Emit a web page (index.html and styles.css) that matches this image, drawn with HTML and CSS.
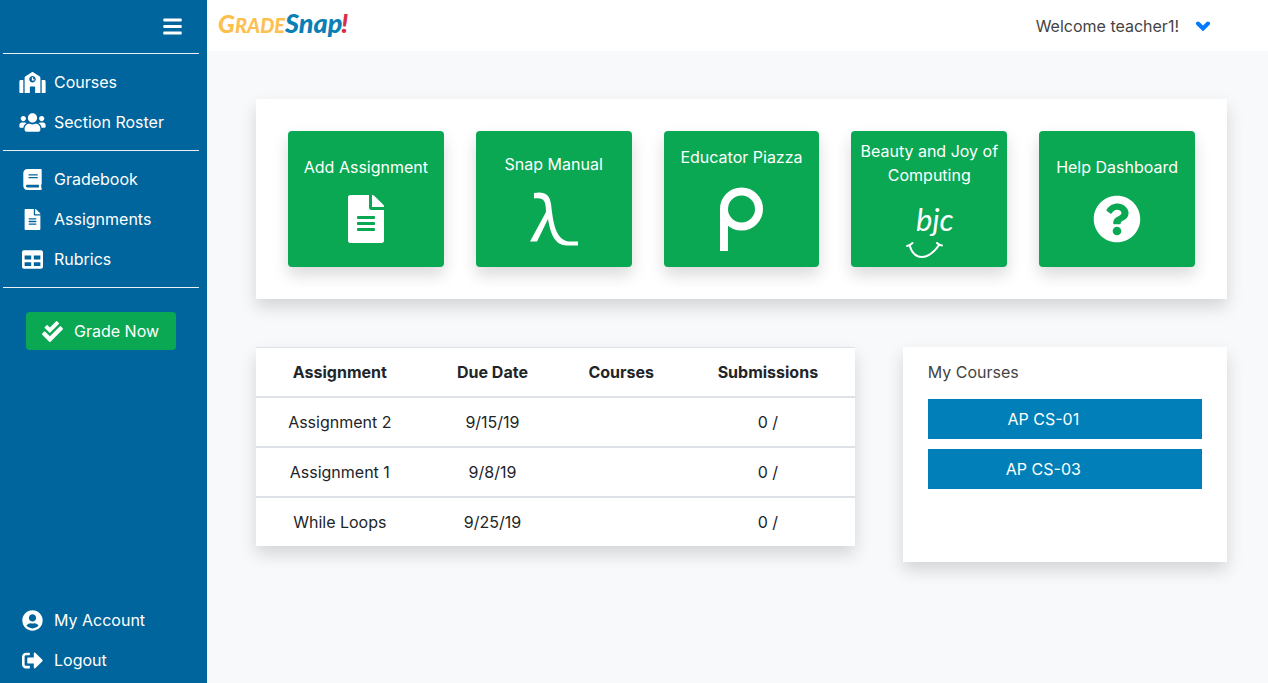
FILE: index.html
```html
<!DOCTYPE html>
<html lang="en">
<head>
<meta charset="utf-8">
<meta name="viewport" content="width=device-width, initial-scale=1">
<title>GradeSnap!</title>
<link rel="stylesheet" href="styles.css">
</head>
<body>
<div class="layout">
  <nav class="sidebar" aria-label="Main">
    <div class="sidebar-top">
      <button class="menu-toggle" type="button" aria-label="Toggle menu">
        <svg class="icon-menu" viewBox="0 0 448 512"><path d="M16 132h416c9 0 16-7 16-16V76c0-9-7-16-16-16H16C7 60 0 67 0 76v40c0 9 7 16 16 16zm0 160h416c9 0 16-7 16-16v-40c0-9-7-16-16-16H16c-9 0-16 7-16 16v40c0 9 7 16 16 16zm0 160h416c9 0 16-7 16-16v-40c0-9-7-16-16-16H16c-9 0-16 7-16 16v40c0 9 7 16 16 16z"/></svg>
      </button>
    </div>
    <div class="nav-group">
      <a class="nav-link" href="#"><svg class="icon" viewBox="0 0 640 512"><path d="M0 224v272c0 8.84 7.16 16 16 16h80V192H32c-17.67 0-32 14.33-32 32zm360-48h-24v-40c0-4.42-3.58-8-8-8h-16c-4.42 0-8 3.58-8 8v64c0 4.42 3.58 8 8 8h48c4.42 0 8-3.58 8-8v-16c0-4.42-3.58-8-8-8zm137.75-63.96l-160-106.67a32.02 32.02 0 0 0-35.5 0l-160 106.67A32.002 32.002 0 0 0 128 138.66V512h128V368c0-8.84 7.16-16 16-16h96c8.84 0 16 7.16 16 16v144h128V138.67c0-10.7-5.35-20.7-14.25-26.63zM320 256c-44.18 0-80-35.82-80-80s35.82-80 80-80 80 35.82 80 80-35.82 80-80 80zm288-64h-64v320h80c8.84 0 16-7.16 16-16V224c0-17.67-14.33-32-32-32z"/></svg><span>Courses</span></a>
      <a class="nav-link" href="#"><svg class="icon" viewBox="0 0 640 512"><path d="M96 224c35.3 0 64-28.7 64-64s-28.7-64-64-64-64 28.7-64 64 28.7 64 64 64zm448 0c35.3 0 64-28.7 64-64s-28.7-64-64-64-64 28.7-64 64 28.7 64 64 64zm32 32h-64c-17.6 0-33.5 7.1-45.1 18.6 40.3 22.1 68.9 62 75.1 109.4h66c17.7 0 32-14.3 32-32v-32c0-35.3-28.7-64-64-64zm-256 0c61.9 0 112-50.1 112-112S381.9 32 320 32 208 82.1 208 144s50.1 112 112 112zm76.8 32h-8.3c-20.8 10-43.9 16-68.5 16s-47.6-6-68.5-16h-8.3C179.6 288 128 339.6 128 403.2V432c0 26.5 21.5 48 48 48h288c26.5 0 48-21.5 48-48v-28.8c0-63.6-51.6-115.2-115.2-115.2zm-223.7-13.4C161.5 263.1 145.6 256 128 256H64c-35.3 0-64 28.7-64 64v32c0 17.7 14.3 32 32 32h65.9c6.3-47.4 34.9-87.3 75.2-109.4z"/></svg><span>Section Roster</span></a>
    </div>
    <div class="nav-group">
      <a class="nav-link" href="#"><svg class="icon" viewBox="0 0 448 512"><path d="M448 360V24c0-13.3-10.7-24-24-24H96C43 0 0 43 0 96v320c0 53 43 96 96 96h328c13.3 0 24-10.7 24-24v-16c0-7.5-3.5-14.3-8.9-18.7-4.2-15.4-4.2-59.3 0-74.7 5.4-4.3 8.9-11.1 8.9-18.6zM128 134c0-3.3 2.7-6 6-6h212c3.3 0 6 2.7 6 6v20c0 3.3-2.7 6-6 6H134c-3.3 0-6-2.7-6-6v-20zm0 64c0-3.3 2.7-6 6-6h212c3.3 0 6 2.7 6 6v20c0 3.3-2.7 6-6 6H134c-3.3 0-6-2.7-6-6v-20zm253.4 250H96c-17.7 0-32-14.3-32-32 0-17.6 14.4-32 32-32h285.4c-1.9 17.1-1.9 46.9 0 64z"/></svg><span>Gradebook</span></a>
      <a class="nav-link" href="#"><svg class="icon" viewBox="0 0 384 512"><path d="M224 136V0H24C10.7 0 0 10.7 0 24v464c0 13.3 10.7 24 24 24h336c13.3 0 24-10.7 24-24V160H248c-13.2 0-24-10.8-24-24zm64 236c0 6.6-5.4 12-12 12H108c-6.6 0-12-5.4-12-12v-8c0-6.6 5.4-12 12-12h168c6.6 0 12 5.4 12 12v8zm0-64c0 6.6-5.4 12-12 12H108c-6.6 0-12-5.4-12-12v-8c0-6.6 5.4-12 12-12h168c6.6 0 12 5.4 12 12v8zm0-72v8c0 6.6-5.4 12-12 12H108c-6.6 0-12-5.4-12-12v-8c0-6.6 5.4-12 12-12h168c6.6 0 12 5.4 12 12zm96-114.1v6.1H256V0h6.1c6.4 0 12.5 2.5 17 7l97.9 98c4.5 4.5 7 10.6 7 16.9z"/></svg><span>Assignments</span></a>
      <a class="nav-link" href="#"><svg class="icon" viewBox="0 0 512 512"><path d="M464 32H48C21.49 32 0 53.49 0 80v352c0 26.51 21.49 48 48 48h416c26.51 0 48-21.49 48-48V80c0-26.51-21.49-48-48-48zM224 416H64v-96h160v96zm0-160H64v-96h160v96zm224 160H288v-96h160v96zm0-160H288v-96h160v96z"/></svg><span>Rubrics</span></a>
    </div>
    <a class="grade-now" href="#"><svg class="icon" viewBox="0 0 512 512"><path d="M505 174.8l-39.6-39.6c-9.4-9.4-24.6-9.4-33.9 0L192 374.7 80.6 263.2c-9.4-9.4-24.6-9.4-33.9 0L7 302.9c-9.4 9.4-9.4 24.6 0 34L175 505c9.4 9.4 24.6 9.4 33.9 0l296-296.2c9.4-9.5 9.4-24.7.1-34zm-324.3 106c6.2 6.3 16.4 6.3 22.6 0l208-208.2c6.2-6.3 6.2-16.4 0-22.6L366.1 4.7c-6.2-6.3-16.4-6.3-22.6 0L192 156.2l-55.4-55.5c-6.2-6.3-16.4-6.3-22.6 0L68.7 146c-6.2 6.3-6.2 16.4 0 22.6l112 112.2z"/></svg><span>Grade Now</span></a>
    <div class="nav-bottom">
      <a class="nav-link" href="#"><svg class="icon" viewBox="0 0 496 512"><path d="M248 8C111 8 0 119 0 256s111 248 248 248 248-111 248-248S385 8 248 8zm0 96c48.6 0 88 39.4 88 88s-39.4 88-88 88-88-39.4-88-88 39.4-88 88-88zm0 344c-58.7 0-111.3-26.6-146.5-68.2 18.8-35.4 55.6-59.8 98.5-59.8 2.4 0 4.8.4 7.1 1.1 13 4.2 26.6 6.9 40.9 6.9 14.3 0 28-2.7 40.9-6.9 2.3-.7 4.7-1.1 7.1-1.1 42.9 0 79.7 24.4 98.5 59.8C359.3 421.4 306.7 448 248 448z"/></svg><span>My Account</span></a>
      <a class="nav-link" href="#"><svg class="icon" viewBox="0 0 512 512"><path d="M497 273L329 441c-15 15-41 4.5-41-17v-96H152c-13.3 0-24-10.7-24-24v-96c0-13.3 10.7-24 24-24h136V88c0-21.4 25.9-32 41-17l168 168c9.3 9.4 9.3 24.6 0 34zM192 436v-40c0-6.6-5.4-12-12-12H96c-17.7 0-32-14.3-32-32V160c0-17.7 14.3-32 32-32h84c6.6 0 12-5.4 12-12V76c0-6.6-5.4-12-12-12H96c-53 0-96 43-96 96v192c0 53 43 96 96 96h84c6.6 0 12-5.4 12-12z"/></svg><span>Logout</span></a>
    </div>
  </nav>

  <div class="page">
    <header class="topbar">
      <a class="brand" href="#" aria-label="GradeSnap!">
        <svg class="logo" viewBox="0 0 134 28">
          <text class="logo-grade" y="21"><tspan class="logo-cap">G</tspan>RADE</text>
          <text class="logo-snap" x="67" y="21">Snap</text>
          <text class="logo-bang" x="123" y="21">!</text>
        </svg>
      </a>
      <button class="user-menu" type="button">
        <span>Welcome teacher1!</span>
        <svg class="chevron" viewBox="0 0 14 10"><path d="M2 2.500l5 5 5-5"/></svg>
      </button>
    </header>

    <main class="content">
      <section class="card tiles">
        <a class="tile" href="#"><span>Add Assignment</span>
          <svg class="tile-icon tile-icon-md" viewBox="0 0 384 512"><path d="M224 136V0H24C10.7 0 0 10.7 0 24v464c0 13.3 10.7 24 24 24h336c13.3 0 24-10.7 24-24V160H248c-13.2 0-24-10.8-24-24zm64 236c0 6.6-5.4 12-12 12H108c-6.6 0-12-5.4-12-12v-8c0-6.6 5.4-12 12-12h168c6.6 0 12 5.4 12 12v8zm0-64c0 6.6-5.4 12-12 12H108c-6.6 0-12-5.4-12-12v-8c0-6.6 5.4-12 12-12h168c6.6 0 12 5.4 12 12v8zm0-72v8c0 6.6-5.4 12-12 12H108c-6.6 0-12-5.4-12-12v-8c0-6.6 5.4-12 12-12h168c6.6 0 12 5.4 12 12zm96-114.1v6.1H256V0h6.1c6.4 0 12.5 2.5 17 7l97.9 98c4.5 4.5 7 10.6 7 16.9z"/></svg></a>
        <a class="tile" href="#"><span>Snap Manual</span>
          <svg class="tile-icon tile-icon-lambda" viewBox="0 0 48 54"><path d="M4 1C14 -1 19.500 2 21 12C23 29 25 47 38 49.500L48 49.500V53.500H37C25 53.500 20.500 42 18 27L7 49.500H0L16 20C16 9 14 5 4 6.500Z"/></svg></a>
        <a class="tile" href="#"><span>Educator Piazza</span>
          <svg class="tile-icon tile-icon-rho" viewBox="0 0 44 68"><g class="line"><circle cx="22.500" cy="24" r="17.500"/><path d="M5 24V66"/></g></svg></a>
        <a class="tile" href="#"><span>Beauty and Joy of Computing</span>
          <svg class="tile-icon tile-icon-bjc" viewBox="0 0 48 56"><text x="11" y="28">bjc</text><path class="smile" d="M2 43C4 43 6 41.500 7.500 40M4.500 42C9 58 23 58 34.500 41.500M32 40C33 41 34.500 42 37 42.500"/></svg></a>
        <a class="tile" href="#"><span>Help Dashboard</span>
          <svg class="tile-icon tile-icon-md" viewBox="0 0 512 512"><path d="M504 256c0 136.997-111.043 248-248 248S8 392.997 8 256C8 119.083 119.043 8 256 8s248 111.083 248 248zM262.655 90c-54.497 0-89.255 22.957-116.549 63.758-3.536 5.286-2.353 12.415 2.715 16.258l34.699 26.31c5.205 3.947 12.621 3.008 16.665-2.122 17.864-22.658 30.113-35.797 57.303-35.797 20.429 0 45.698 13.148 45.698 32.958 0 14.976-12.363 22.667-32.534 33.976C247.128 238.528 216 254.941 216 296v4c0 6.627 5.373 12 12 12h56c6.627 0 12-5.373 12-12v-1.333c0-28.462 83.186-29.647 83.186-106.667 0-58.002-60.165-102-116.531-102zM256 338c-25.365 0-46 20.635-46 46 0 25.364 20.635 46 46 46s46-20.636 46-46c0-25.364-20.635-46-46-46z"/></svg></a>
      </section>

      <div class="row">
        <section class="card">
          <table class="assignments">
            <colgroup><col class="col-name"><col class="col-date"><col class="col-courses"><col class="col-subs"></colgroup>
            <thead><tr><th>Assignment</th><th>Due Date</th><th>Courses</th><th>Submissions</th></tr></thead>
            <tbody>
              <tr><td>Assignment 2</td><td>9/15/19</td><td></td><td>0 /</td></tr>
              <tr><td>Assignment 1</td><td>9/8/19</td><td></td><td>0 /</td></tr>
              <tr><td>While Loops</td><td>9/25/19</td><td></td><td>0 /</td></tr>
            </tbody>
          </table>
        </section>
        <section class="card courses">
          <h2 class="courses-title">My Courses</h2>
          <a class="course" href="#">AP CS-01</a>
          <a class="course" href="#">AP CS-03</a>
        </section>
      </div>
    </main>
  </div>
</div>
</body>
</html>
```

FILE: styles.css
```css
* { box-sizing: border-box; }

body {
  margin: 0;
  background: #f8f9fb;
  color: #212529;
  font: 16px/24px Inter, "Liberation Sans", sans-serif;
}

a { color: inherit; text-decoration: none; }

button {
  border: 0;
  padding: 0;
  background: none;
  font: inherit;
  cursor: pointer;
}

svg { display: block; fill: currentColor; }

.layout { display: flex; min-height: 100vh; }

/* Sidebar */
.sidebar {
  display: flex;
  flex: none;
  flex-direction: column;
  width: 207px;
  padding: 0 8px 3px 3px;
  background: #00659c;
  color: #fff;
}

.sidebar-top {
  display: flex;
  align-items: center;
  justify-content: flex-end;
  height: 54px;
  padding-right: 17px;
  border-bottom: 1px solid #e9f1f6;
}

.menu-toggle { color: #fff; }
.icon-menu { width: 19px; height: 21px; }

.nav-group { padding: 8px 0; border-bottom: 1px solid #e9f1f6; }

.nav-link {
  display: flex;
  align-items: center;
  gap: 8px;
  height: 40px;
  padding-left: 16px;
}

.icon { flex: none; width: 27px; height: 21px; }

.grade-now {
  display: flex;
  align-items: center;
  align-self: flex-start;
  gap: 8px;
  width: 150px;
  height: 38px;
  margin: 24px 0 0 23px;
  padding-left: 13px;
  border-radius: 4px;
  background: #0aa853;
}

.nav-bottom { margin-top: auto; }

/* Top bar */
.page { flex: 1; min-width: 0; }

.topbar {
  display: flex;
  align-items: center;
  justify-content: space-between;
  height: 51px;
  padding: 0 58px 0 11px;
  background: #fff;
}

.logo { width: 134px; height: 28px; overflow: visible; }
.logo text { font-family: Lato, sans-serif; font-style: italic; font-weight: 900; }
.logo-grade { fill: #fdc04f; font-size: 20px; }
.logo-grade .logo-cap { font-size: 25px; }
.logo-snap { fill: #0a7fb5; font-size: 27px; }
.logo-bang { fill: #d9304a; font-size: 27px; }

.user-menu { display: flex; align-items: center; gap: 17px; color: #444; }
.chevron { width: 14px; height: 10px; fill: none; stroke: #007bff; stroke-width: 4; stroke-linecap: round; }

/* Content */
.content {
  display: grid;
  gap: 48px;
  padding: 48px 41px 48px 49px;
}

.card { background: #fff; box-shadow: 0 8px 16px rgba(0, 0, 0, 0.15); }

.tiles {
  display: grid;
  grid-template-columns: repeat(5, minmax(0, 1fr));
  gap: 32px;
  padding: 32px;
}

.tile {
  display: flex;
  flex-direction: column;
  align-items: center;
  justify-content: center;
  gap: 16px;
  min-height: 136px;
  padding: 8px;
  border-radius: 4px;
  background: #0aa853;
  box-shadow: 0 8px 16px rgba(0, 0, 0, 0.15);
  color: #fff;
  text-align: center;
}

.tile-icon-md { height: 48px; }
.tile-icon-lambda { width: 48px; height: 54px; }
.tile-icon-rho { width: 44px; height: 68px; }
.tile-icon-rho .line { fill: none; stroke: #fff; stroke-width: 8; }
.tile-icon-bjc { width: 48px; height: 56px; overflow: visible; }
.tile-icon-bjc text { font: italic 400 31px Lato, sans-serif; }
.smile { fill: none; stroke: #fff; stroke-width: 2; stroke-linecap: round; }

.row {
  display: grid;
  grid-template-columns: minmax(0, 24fr) minmax(0, 13fr);
  align-items: start;
  gap: 48px;
}

.assignments {
  width: 100%;
  border-top: 1px solid #dee2e6;
  border-spacing: 0;
  table-layout: fixed;
  text-align: center;
}

.assignments th,
.assignments td { padding: 12px; }
.assignments th { font-weight: 700; }
.assignments td { border-top: 2px solid #dee2e6; height: 50px; }
.col-name { width: 28%; }
.col-date { width: 23%; }
.col-courses { width: 20%; }
.col-subs { width: 29%; }

.courses {
  display: flex;
  flex-direction: column;
  gap: 10px;
  min-height: 215px;
  padding: 13px 25px 25px;
}

.courses-title { margin: 0 0 5px; color: #444; font-size: 16px; font-weight: 400; }

.course {
  padding: 8px 43px 8px 0;
  background: #007fb8;
  color: #fff;
  text-align: center;
}
```
